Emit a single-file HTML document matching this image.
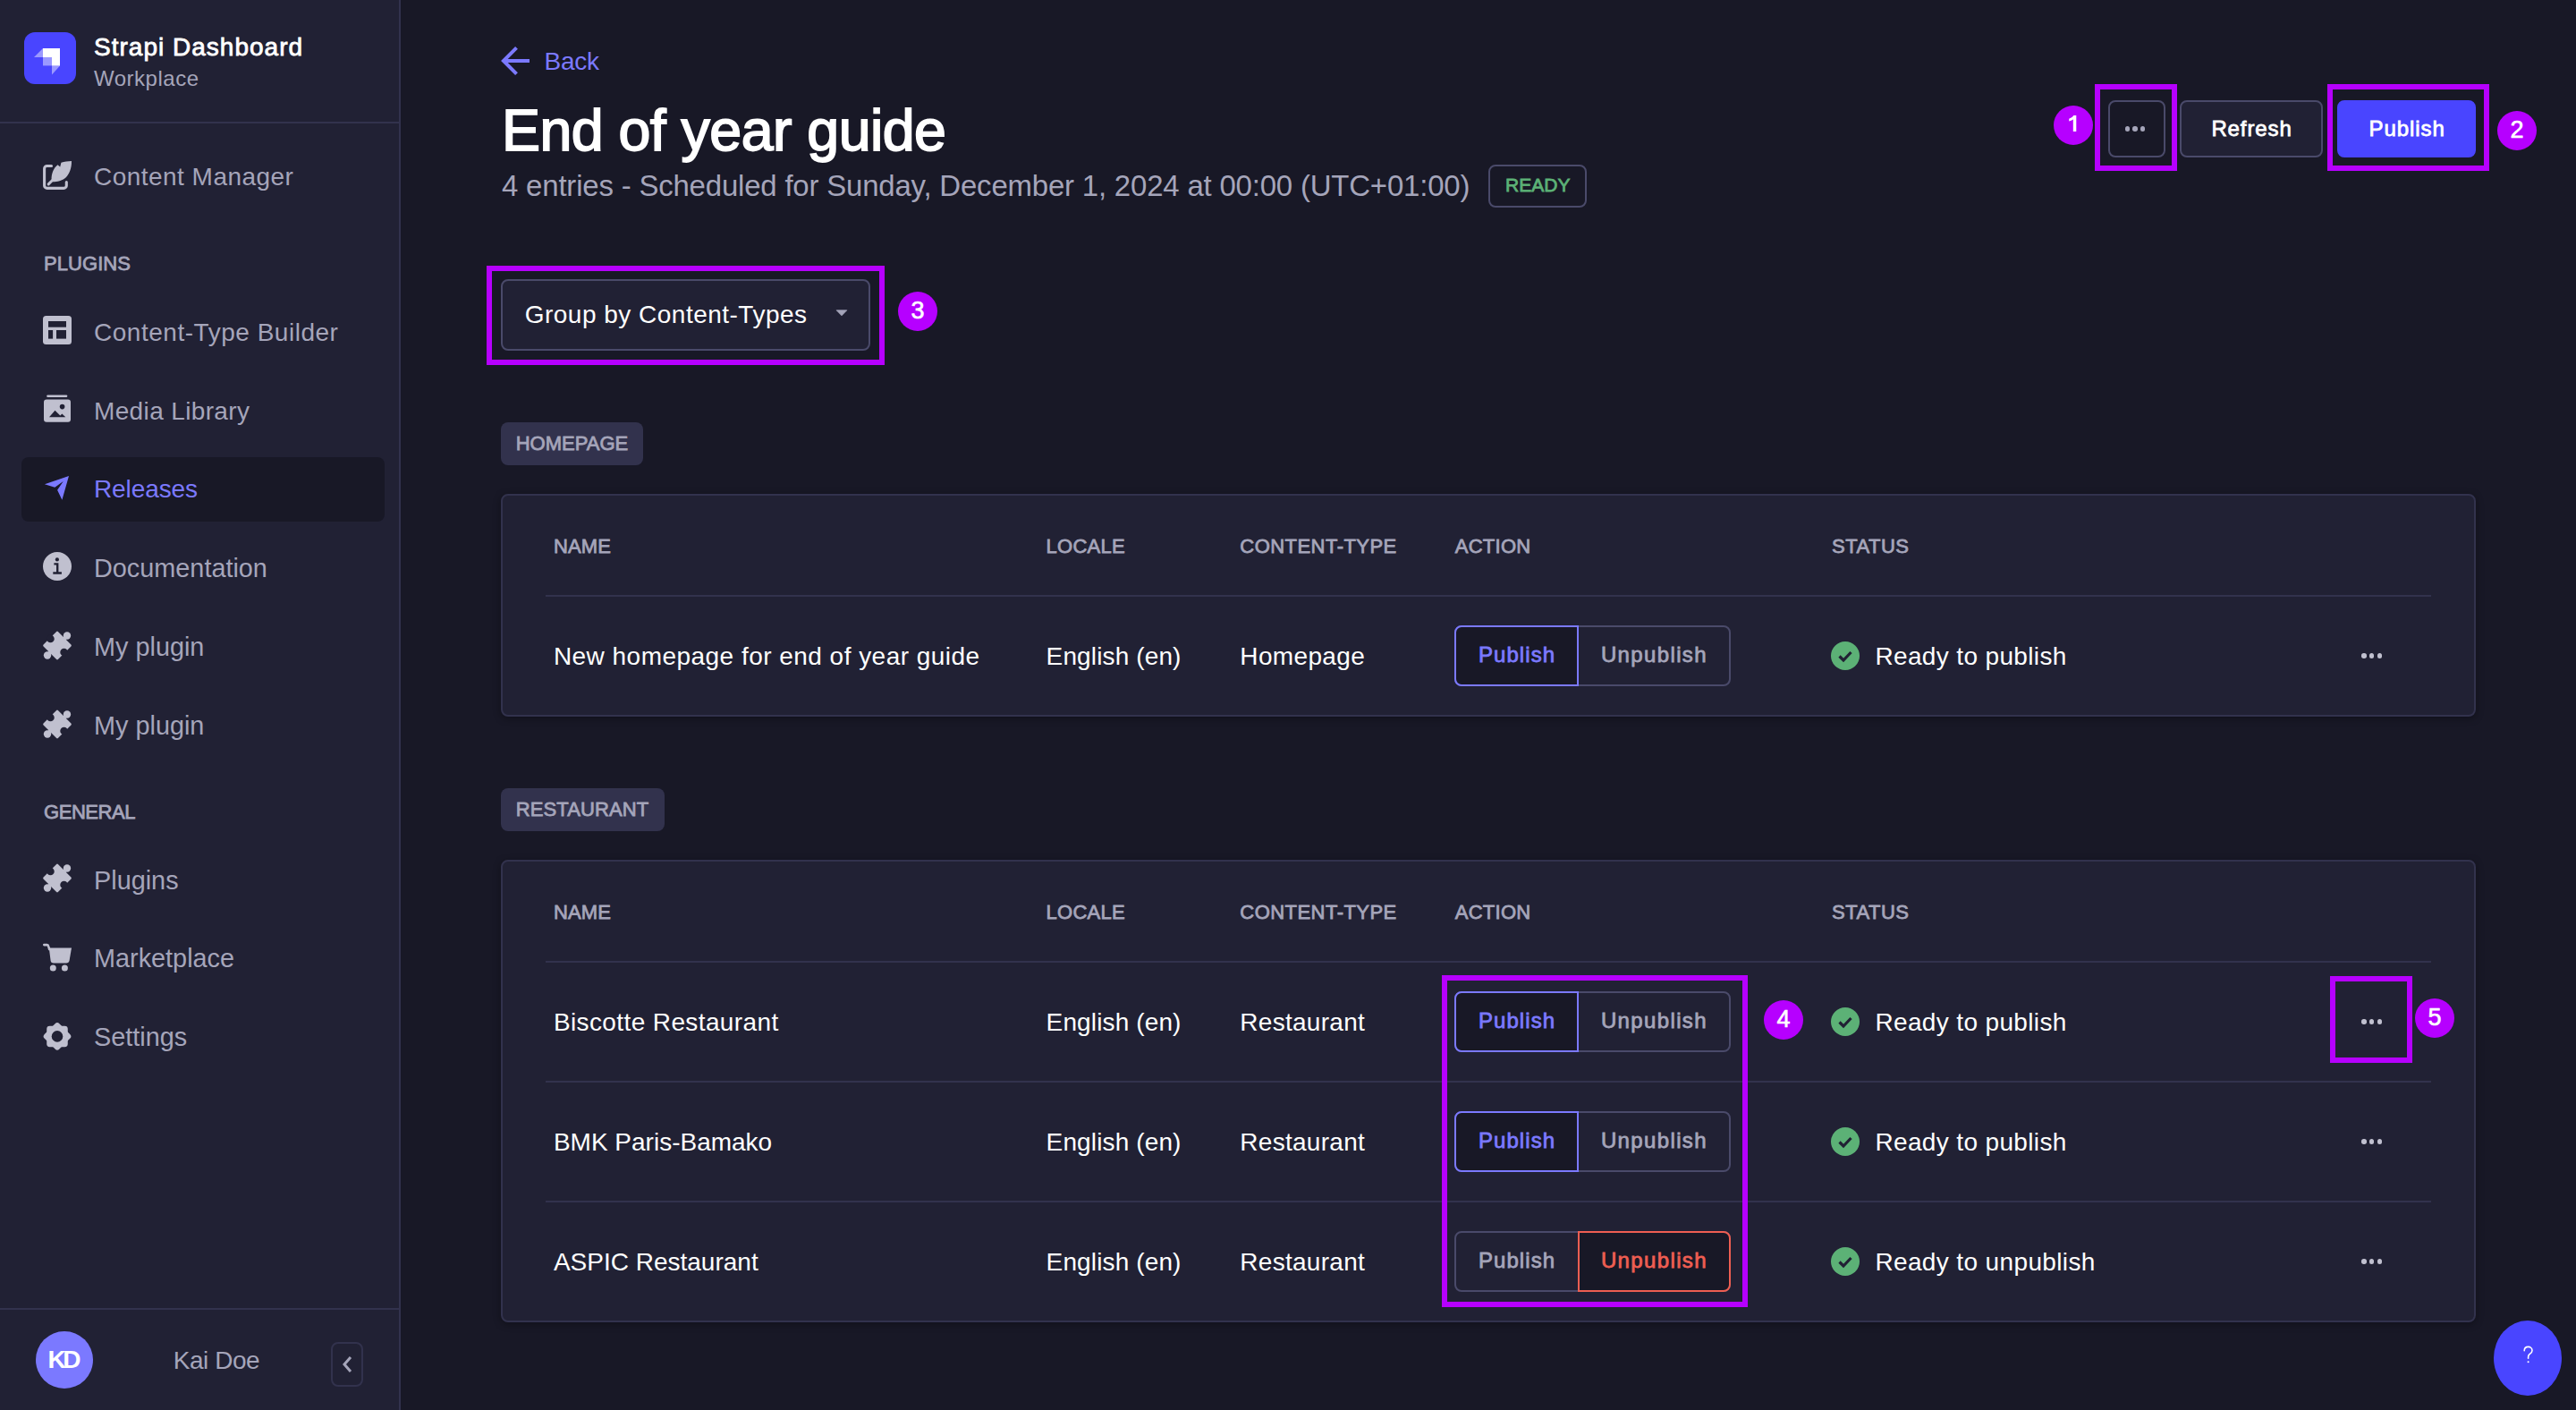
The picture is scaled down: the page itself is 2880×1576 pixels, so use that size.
<!DOCTYPE html>
<html><head><meta charset="utf-8"><style>
html,body{margin:0;padding:0;}
body{width:2880px;height:1576px;overflow:hidden;position:relative;background:#181826;font-family:"Liberation Sans",sans-serif;}
.t{position:absolute;white-space:nowrap;line-height:1;}
.b{position:absolute;}
.ann{border-radius:50%;background:#b600ff;color:#fff;font-size:27px;line-height:42px;text-align:center;-webkit-text-stroke:0.6px #fff;font-family:"Liberation Sans",sans-serif;}
</style></head><body>
<div class="b" style="left:0px;top:0px;width:446px;height:1576px;background:#212134;"></div>
<div class="b" style="left:446px;top:0px;width:2px;height:1576px;background:#32324d;"></div>
<div class="b" style="left:0px;top:136px;width:446px;height:2px;background:#32324d;"></div>
<div class="b" style="left:0px;top:1462px;width:446px;height:2px;background:#32324d;"></div>
<svg class="b" style="left:27px;top:36px" width="58" height="58" viewBox="0 0 58 58">
<rect width="58" height="58" rx="12" fill="#4945ff"/>
<path d="M40 18 H21 V28 H31 V37.4 H40 Z" fill="#fff"/>
<path d="M21 28 L11 28 L21 18 Z" fill="#fff" fill-opacity="0.45"/>
<path d="M21 28 H31 V37.4 H21 Z" fill="#fff" fill-opacity="0.45"/>
<path d="M31 37.4 V47.5 L40 37.4 Z" fill="#fff" fill-opacity="0.45"/>
</svg>
<div class="t" style="left:105.0px;top:38.8px;font-size:28.00px;color:#ffffff;-webkit-text-stroke:0.80px #ffffff;letter-spacing:1.01px;">Strapi Dashboard</div>
<div class="t" style="left:105.0px;top:75.6px;font-size:24.00px;color:#a5a5ba;letter-spacing:0.51px;">Workplace</div>
<div class="b" style="left:24px;top:511px;width:406px;height:72px;background:#181826;border-radius:8px;"></div>
<div class="t" style="left:105.0px;top:184.3px;font-size:28.00px;color:#a5a5ba;letter-spacing:0.47px;">Content Manager</div>
<svg class="b" style="left:48px;top:180.0px;overflow:visible" width="32" height="32" viewBox="0 0 32 32"><path d="M9.5 5.5 H4.6 a3 3 0 0 0 -3 3 V27.4 a3 3 0 0 0 3 3 H23.3 a3 3 0 0 0 3 -3 V23.6" stroke="#c0c0cf" stroke-width="3.1" fill="none" stroke-linecap="round"/><path d="M9.6 20.8 C9.4 14 12 7.5 16.5 4.2 L19.2 6.6 L20.4 1.8 C24 0.6 28 0.1 32 0 C32.2 8 29.5 14.5 25.5 18.5 C21.5 22 16 23.2 11 23.3 Z" fill="#c0c0cf"/><path d="M10.8 21.3 L6.2 25.9" stroke="#c0c0cf" stroke-width="3" stroke-linecap="round"/></svg>
<div class="t" style="left:105.0px;top:357.5px;font-size:28.00px;color:#a5a5ba;letter-spacing:0.52px;">Content-Type Builder</div>
<svg class="b" style="left:48px;top:353.2px;overflow:visible" width="32" height="32" viewBox="0 0 32 32"><rect x="0" y="0" width="32" height="32" rx="3.5" fill="#c0c0cf"/><rect x="6" y="6" width="20" height="6.7" fill="#212134"/><rect x="6" y="16" width="5.1" height="9.6" fill="#212134"/><rect x="15" y="16" width="11" height="9.6" fill="#212134"/></svg>
<div class="t" style="left:105.0px;top:445.6px;font-size:28.00px;color:#a5a5ba;letter-spacing:0.36px;">Media Library</div>
<svg class="b" style="left:48px;top:441.3px;overflow:visible" width="32" height="32" viewBox="0 0 32 32"><rect x="4.2" y="0.4" width="23.1" height="2.5" rx="1.2" fill="#c0c0cf"/><rect x="1" y="5.4" width="30" height="25.3" rx="3" fill="#c0c0cf"/><path d="M7 25.3 L13.5 17.8 L19.3 23.5 L21.4 21.4 L25.3 25.3 Z" fill="#212134"/><circle cx="21.6" cy="13.6" r="2.8" fill="#212134"/></svg>
<div class="t" style="left:105.0px;top:533.3px;font-size:28.00px;color:#7b79ff;letter-spacing:-0.10px;">Releases</div>
<svg class="b" style="left:48px;top:529.0px;overflow:visible" width="32" height="32" viewBox="0 0 32 32"><path d="M29 2.9 L1.9 12.3 L13.3 15.8 L22.7 9.1 L16.1 18.7 L21.4 29.8 Z" fill="#7b79ff"/></svg>
<div class="t" style="left:105.0px;top:620.6px;font-size:28.84px;color:#a5a5ba;">Documentation</div>
<svg class="b" style="left:48px;top:617.0px;overflow:visible" width="32" height="32" viewBox="0 0 32 32"><circle cx="16" cy="16" r="16" fill="#c0c0cf"/><circle cx="15.9" cy="8.4" r="2.1" fill="#212134"/><path d="M12.4 12.3 H17.4 V22.2 H20.9 V24.7 H11.3 V22.2 H15 V14.4 H12.4 Z" fill="#212134"/></svg>
<div class="t" style="left:105.0px;top:709.2px;font-size:28.84px;color:#a5a5ba;">My plugin</div>
<svg class="b" style="left:48px;top:705.6px;overflow:visible" width="32" height="32" viewBox="0 0 32 32"><g transform="translate(16 15.5) scale(1.05) translate(-16 -16) rotate(45 16 16)"><rect x="5" y="5" width="22" height="22" rx="1.2" fill="#c0c0cf"/><rect x="14" y="1.5" width="4" height="4" fill="#c0c0cf"/><circle cx="16" cy="1.2" r="4" fill="#c0c0cf"/><rect x="14" y="26.5" width="4" height="4" fill="#c0c0cf"/><circle cx="16" cy="30.8" r="4" fill="#c0c0cf"/><circle cx="5.8" cy="16" r="4.1" fill="#212134"/><circle cx="26.2" cy="16" r="4.1" fill="#212134"/></g></svg>
<div class="t" style="left:105.0px;top:797.1px;font-size:28.84px;color:#a5a5ba;">My plugin</div>
<svg class="b" style="left:48px;top:793.5px;overflow:visible" width="32" height="32" viewBox="0 0 32 32"><g transform="translate(16 15.5) scale(1.05) translate(-16 -16) rotate(45 16 16)"><rect x="5" y="5" width="22" height="22" rx="1.2" fill="#c0c0cf"/><rect x="14" y="1.5" width="4" height="4" fill="#c0c0cf"/><circle cx="16" cy="1.2" r="4" fill="#c0c0cf"/><rect x="14" y="26.5" width="4" height="4" fill="#c0c0cf"/><circle cx="16" cy="30.8" r="4" fill="#c0c0cf"/><circle cx="5.8" cy="16" r="4.1" fill="#212134"/><circle cx="26.2" cy="16" r="4.1" fill="#212134"/></g></svg>
<div class="t" style="left:105.0px;top:969.6px;font-size:28.84px;color:#a5a5ba;">Plugins</div>
<svg class="b" style="left:48px;top:966.0px;overflow:visible" width="32" height="32" viewBox="0 0 32 32"><g transform="translate(16 15.5) scale(1.05) translate(-16 -16) rotate(45 16 16)"><rect x="5" y="5" width="22" height="22" rx="1.2" fill="#c0c0cf"/><rect x="14" y="1.5" width="4" height="4" fill="#c0c0cf"/><circle cx="16" cy="1.2" r="4" fill="#c0c0cf"/><rect x="14" y="26.5" width="4" height="4" fill="#c0c0cf"/><circle cx="16" cy="30.8" r="4" fill="#c0c0cf"/><circle cx="5.8" cy="16" r="4.1" fill="#212134"/><circle cx="26.2" cy="16" r="4.1" fill="#212134"/></g></svg>
<div class="t" style="left:105.0px;top:1057.1px;font-size:28.84px;color:#a5a5ba;">Marketplace</div>
<svg class="b" style="left:48px;top:1053.5px;overflow:visible" width="32" height="32" viewBox="0 0 32 32"><path d="M1.3 2.1 H4.6 Q5.9 2.1 6.2 3.8 L7.2 7" fill="none" stroke="#c0c0cf" stroke-width="2.6" stroke-linecap="round"/><path d="M6.8 5.5 H32 L29.6 19.5 Q29.1 22.4 26 22.4 H11.8 Q9 22.4 8.6 19.8 Z" fill="#c0c0cf"/><circle cx="11.3" cy="28" r="3.5" fill="#c0c0cf"/><circle cx="24.4" cy="28" r="3.5" fill="#c0c0cf"/></svg>
<div class="t" style="left:105.0px;top:1145.1px;font-size:28.84px;color:#a5a5ba;">Settings</div>
<svg class="b" style="left:48px;top:1141.5px;overflow:visible" width="32" height="32" viewBox="0 0 32 32"><g transform="translate(16 16.4) scale(1.07) translate(-16 -16.5)"><rect x="5" y="5.5" width="22" height="22" rx="3.2" fill="#c0c0cf"/><rect x="5" y="5.5" width="22" height="22" rx="3.2" fill="#c0c0cf" transform="rotate(45 16 16.5)"/></g><circle cx="16" cy="16.4" r="6.3" fill="#212134"/></svg>
<div class="t" style="left:49.0px;top:283.7px;font-size:22.00px;color:#a5a5ba;-webkit-text-stroke:0.80px #a5a5ba;letter-spacing:0.07px;">PLUGINS</div>
<div class="t" style="left:49.0px;top:897.1px;font-size:22.00px;color:#a5a5ba;-webkit-text-stroke:0.80px #a5a5ba;letter-spacing:-0.44px;">GENERAL</div>
<div class="b" style="left:40px;top:1488px;width:64px;height:64px;border-radius:50%;background:#7b79ff;"></div>
<div class="t" style="left:53.6px;top:1506.1px;font-size:28.00px;color:#ffffff;font-weight:700;letter-spacing:-3.44px;">KD</div>
<div class="t" style="left:193.7px;top:1506.5px;font-size:28.00px;color:#a5a5ba;letter-spacing:-0.44px;">Kai Doe</div>
<div class="b" style="left:370px;top:1500px;width:36px;height:50px;border:2px solid #32324d;border-radius:8px;box-sizing:border-box;"></div>
<svg class="b" style="left:380px;top:1514px" width="16" height="22" viewBox="0 0 16 22"><path d="M12 3 L5 11 L12 19" stroke="#a5a5ba" stroke-width="3" fill="none"/></svg>
<svg class="b" style="left:556px;top:50px" width="40" height="36" viewBox="0 0 40 36"><path d="M36 18 H7 M21.5 3.4 L6.9 18 L21.5 32.6" stroke="#7b79ff" stroke-width="4" fill="none"/></svg>
<div class="t" style="left:608.5px;top:55.0px;font-size:28.00px;color:#7b79ff;letter-spacing:-0.25px;">Back</div>
<div class="t" style="left:561.0px;top:113.7px;font-size:64.50px;color:#ffffff;-webkit-text-stroke:1.80px #ffffff;letter-spacing:-0.54px;">End of year guide</div>
<div class="t" style="left:561.0px;top:192.1px;font-size:32.96px;color:#a5a5ba;letter-spacing:-0.19px;">4 entries - Scheduled for Sunday, December 1, 2024 at 00:00 (UTC+01:00)</div>
<div class="b" style="left:1664px;top:184px;width:110px;height:48px;border:2px solid #4a4a6a;border-radius:8px;box-sizing:border-box;"></div>
<div class="t" style="left:1683.0px;top:196.2px;font-size:21.00px;color:#5cb176;-webkit-text-stroke:0.80px #5cb176;letter-spacing:0.04px;">READY</div>
<div class="b" style="left:2357px;top:112px;width:64px;height:64px;border:2px solid #4a4a6a;border-radius:8px;box-sizing:border-box;background:#181826;"></div>
<div class="b" style="left:2375.80px;top:141.3px;width:5.4px;height:5.4px;border-radius:50%;background:#a5a5ba;"></div>
<div class="b" style="left:2384.30px;top:141.3px;width:5.4px;height:5.4px;border-radius:50%;background:#a5a5ba;"></div>
<div class="b" style="left:2392.80px;top:141.3px;width:5.4px;height:5.4px;border-radius:50%;background:#a5a5ba;"></div>
<div class="b" style="left:2437px;top:112px;width:160px;height:64px;border:2px solid #4a4a6a;border-radius:8px;box-sizing:border-box;background:#212134;"></div>
<div class="t" style="left:2472.4px;top:131.9px;font-size:24.00px;color:#ffffff;-webkit-text-stroke:0.80px #ffffff;letter-spacing:0.89px;">Refresh</div>
<div class="b" style="left:2613px;top:112px;width:155px;height:64px;border:2px solid #4945ff;border-radius:8px;box-sizing:border-box;background:#4945ff;"></div>
<div class="t" style="left:2648.5px;top:131.9px;font-size:24.00px;color:#ffffff;-webkit-text-stroke:0.80px #ffffff;letter-spacing:0.95px;">Publish</div>
<div class="b" style="left:560px;top:312px;width:413px;height:80px;border:2px solid #4a4a6a;border-radius:8px;box-sizing:border-box;background:#212134;"></div>
<div class="t" style="left:586.7px;top:338.3px;font-size:28.00px;color:#ffffff;letter-spacing:0.49px;">Group by Content-Types</div>
<svg class="b" style="left:933px;top:345px" width="16" height="10" viewBox="0 0 16 10"><path d="M2.2 1.8 H13.8 L8 7.8 Z" fill="#a5a5ba" stroke="#a5a5ba" stroke-width="0.8" stroke-linejoin="round"/></svg>
<div class="b" style="left:560px;top:472px;width:159px;height:48px;background:#32324d;border-radius:8px;"></div>
<div class="t" style="left:576.7px;top:484.7px;font-size:22.00px;color:#a5a5ba;-webkit-text-stroke:0.80px #a5a5ba;">HOMEPAGE</div>
<div class="b" style="left:560px;top:552px;width:2208px;height:249px;border:2px solid #32324d;border-radius:8px;box-sizing:border-box;background:#212134;box-shadow:0 2px 8px rgba(3,3,5,0.35);"></div>
<div class="t" style="left:618.9px;top:600.2px;font-size:22.00px;color:#a5a5ba;-webkit-text-stroke:0.80px #a5a5ba;letter-spacing:0.15px;">NAME</div>
<div class="t" style="left:1169.6px;top:600.2px;font-size:22.00px;color:#a5a5ba;-webkit-text-stroke:0.80px #a5a5ba;letter-spacing:0.24px;">LOCALE</div>
<div class="t" style="left:1386.3px;top:600.2px;font-size:22.00px;color:#a5a5ba;-webkit-text-stroke:0.80px #a5a5ba;letter-spacing:0.46px;">CONTENT-TYPE</div>
<div class="t" style="left:1626.7px;top:600.2px;font-size:22.00px;color:#a5a5ba;-webkit-text-stroke:0.80px #a5a5ba;letter-spacing:0.28px;">ACTION</div>
<div class="t" style="left:2048.0px;top:600.2px;font-size:22.00px;color:#a5a5ba;-webkit-text-stroke:0.80px #a5a5ba;letter-spacing:0.50px;">STATUS</div>
<div class="b" style="left:610px;top:665px;width:2108px;height:2px;background:#32324d;"></div>
<div class="t" style="left:618.9px;top:719.8px;font-size:28.00px;color:#ffffff;letter-spacing:0.47px;">New homepage for end of year guide</div>
<div class="t" style="left:1169.6px;top:719.8px;font-size:28.00px;color:#ffffff;letter-spacing:0.13px;">English (en)</div>
<div class="t" style="left:1386.3px;top:719.8px;font-size:28.00px;color:#ffffff;letter-spacing:0.36px;">Homepage</div>
<div class="b" style="left:1626px;top:698.5px;width:309px;height:68.0px;border:2px solid #4a4a6a;border-radius:8px;box-sizing:border-box;background:#212134;"></div>
<div class="b" style="left:1626px;top:698.5px;width:139px;height:68.0px;border:2px solid #7b79ff;border-radius:8px 0 0 8px;box-sizing:border-box;background:#181826;"></div>
<div class="t" style="left:1652.9px;top:720.2px;font-size:24.00px;color:#7b79ff;-webkit-text-stroke:0.80px #7b79ff;letter-spacing:1.08px;">Publish</div>
<div class="t" style="left:1789.9px;top:720.2px;font-size:24.00px;color:#a5a5ba;-webkit-text-stroke:0.80px #a5a5ba;letter-spacing:1.37px;">Unpublish</div>
<svg class="b" style="left:2047px;top:717.0px" width="32" height="32" viewBox="0 0 32 32"><circle cx="16" cy="16" r="16" fill="#5cb176"/><path d="M9.5 16.5 L14 21 L22.5 12" stroke="#212134" stroke-width="3.2" fill="none"/></svg>
<div class="t" style="left:2096.4px;top:719.8px;font-size:28.00px;color:#ffffff;letter-spacing:0.36px;">Ready to publish</div>
<div class="b" style="left:2640.25px;top:730.25px;width:5.5px;height:5.5px;border-radius:50%;background:#c0c0cf;"></div>
<div class="b" style="left:2648.95px;top:730.25px;width:5.5px;height:5.5px;border-radius:50%;background:#c0c0cf;"></div>
<div class="b" style="left:2657.65px;top:730.25px;width:5.5px;height:5.5px;border-radius:50%;background:#c0c0cf;"></div>
<div class="b" style="left:560px;top:881px;width:183px;height:48px;background:#32324d;border-radius:8px;"></div>
<div class="t" style="left:576.7px;top:893.7px;font-size:22.00px;color:#a5a5ba;-webkit-text-stroke:0.80px #a5a5ba;letter-spacing:0.11px;">RESTAURANT</div>
<div class="b" style="left:560px;top:961px;width:2208px;height:517px;border:2px solid #32324d;border-radius:8px;box-sizing:border-box;background:#212134;box-shadow:0 2px 8px rgba(3,3,5,0.35);"></div>
<div class="t" style="left:618.9px;top:1009.2px;font-size:22.00px;color:#a5a5ba;-webkit-text-stroke:0.80px #a5a5ba;letter-spacing:0.15px;">NAME</div>
<div class="t" style="left:1169.6px;top:1009.2px;font-size:22.00px;color:#a5a5ba;-webkit-text-stroke:0.80px #a5a5ba;letter-spacing:0.24px;">LOCALE</div>
<div class="t" style="left:1386.3px;top:1009.2px;font-size:22.00px;color:#a5a5ba;-webkit-text-stroke:0.80px #a5a5ba;letter-spacing:0.46px;">CONTENT-TYPE</div>
<div class="t" style="left:1626.7px;top:1009.2px;font-size:22.00px;color:#a5a5ba;-webkit-text-stroke:0.80px #a5a5ba;letter-spacing:0.28px;">ACTION</div>
<div class="t" style="left:2048.0px;top:1009.2px;font-size:22.00px;color:#a5a5ba;-webkit-text-stroke:0.80px #a5a5ba;letter-spacing:0.50px;">STATUS</div>
<div class="b" style="left:610px;top:1074px;width:2108px;height:2px;background:#32324d;"></div>
<div class="t" style="left:618.9px;top:1128.8px;font-size:28.00px;color:#ffffff;letter-spacing:0.39px;">Biscotte Restaurant</div>
<div class="t" style="left:1169.6px;top:1128.8px;font-size:28.00px;color:#ffffff;letter-spacing:0.13px;">English (en)</div>
<div class="t" style="left:1386.3px;top:1128.8px;font-size:28.00px;color:#ffffff;letter-spacing:0.28px;">Restaurant</div>
<div class="b" style="left:1626px;top:1107.5px;width:309px;height:68.0px;border:2px solid #4a4a6a;border-radius:8px;box-sizing:border-box;background:#212134;"></div>
<div class="b" style="left:1626px;top:1107.5px;width:139px;height:68.0px;border:2px solid #7b79ff;border-radius:8px 0 0 8px;box-sizing:border-box;background:#181826;"></div>
<div class="t" style="left:1652.9px;top:1129.2px;font-size:24.00px;color:#7b79ff;-webkit-text-stroke:0.80px #7b79ff;letter-spacing:1.08px;">Publish</div>
<div class="t" style="left:1789.9px;top:1129.2px;font-size:24.00px;color:#a5a5ba;-webkit-text-stroke:0.80px #a5a5ba;letter-spacing:1.37px;">Unpublish</div>
<svg class="b" style="left:2047px;top:1126.0px" width="32" height="32" viewBox="0 0 32 32"><circle cx="16" cy="16" r="16" fill="#5cb176"/><path d="M9.5 16.5 L14 21 L22.5 12" stroke="#212134" stroke-width="3.2" fill="none"/></svg>
<div class="t" style="left:2096.4px;top:1128.8px;font-size:28.00px;color:#ffffff;letter-spacing:0.36px;">Ready to publish</div>
<div class="b" style="left:2640.25px;top:1139.25px;width:5.5px;height:5.5px;border-radius:50%;background:#c0c0cf;"></div>
<div class="b" style="left:2648.95px;top:1139.25px;width:5.5px;height:5.5px;border-radius:50%;background:#c0c0cf;"></div>
<div class="b" style="left:2657.65px;top:1139.25px;width:5.5px;height:5.5px;border-radius:50%;background:#c0c0cf;"></div>
<div class="b" style="left:610px;top:1208px;width:2108px;height:2px;background:#32324d;"></div>
<div class="t" style="left:618.9px;top:1262.8px;font-size:28.00px;color:#ffffff;">BMK Paris-Bamako</div>
<div class="t" style="left:1169.6px;top:1262.8px;font-size:28.00px;color:#ffffff;letter-spacing:0.13px;">English (en)</div>
<div class="t" style="left:1386.3px;top:1262.8px;font-size:28.00px;color:#ffffff;letter-spacing:0.28px;">Restaurant</div>
<div class="b" style="left:1626px;top:1241.5px;width:309px;height:68.0px;border:2px solid #4a4a6a;border-radius:8px;box-sizing:border-box;background:#212134;"></div>
<div class="b" style="left:1626px;top:1241.5px;width:139px;height:68.0px;border:2px solid #7b79ff;border-radius:8px 0 0 8px;box-sizing:border-box;background:#181826;"></div>
<div class="t" style="left:1652.9px;top:1263.2px;font-size:24.00px;color:#7b79ff;-webkit-text-stroke:0.80px #7b79ff;letter-spacing:1.08px;">Publish</div>
<div class="t" style="left:1789.9px;top:1263.2px;font-size:24.00px;color:#a5a5ba;-webkit-text-stroke:0.80px #a5a5ba;letter-spacing:1.37px;">Unpublish</div>
<svg class="b" style="left:2047px;top:1260.0px" width="32" height="32" viewBox="0 0 32 32"><circle cx="16" cy="16" r="16" fill="#5cb176"/><path d="M9.5 16.5 L14 21 L22.5 12" stroke="#212134" stroke-width="3.2" fill="none"/></svg>
<div class="t" style="left:2096.4px;top:1262.8px;font-size:28.00px;color:#ffffff;letter-spacing:0.36px;">Ready to publish</div>
<div class="b" style="left:2640.25px;top:1273.25px;width:5.5px;height:5.5px;border-radius:50%;background:#c0c0cf;"></div>
<div class="b" style="left:2648.95px;top:1273.25px;width:5.5px;height:5.5px;border-radius:50%;background:#c0c0cf;"></div>
<div class="b" style="left:2657.65px;top:1273.25px;width:5.5px;height:5.5px;border-radius:50%;background:#c0c0cf;"></div>
<div class="b" style="left:610px;top:1342px;width:2108px;height:2px;background:#32324d;"></div>
<div class="t" style="left:618.9px;top:1396.8px;font-size:28.00px;color:#ffffff;">ASPIC Restaurant</div>
<div class="t" style="left:1169.6px;top:1396.8px;font-size:28.00px;color:#ffffff;letter-spacing:0.13px;">English (en)</div>
<div class="t" style="left:1386.3px;top:1396.8px;font-size:28.00px;color:#ffffff;letter-spacing:0.28px;">Restaurant</div>
<div class="b" style="left:1626px;top:1375.5px;width:309px;height:68.0px;border:2px solid #4a4a6a;border-radius:8px;box-sizing:border-box;background:#212134;"></div>
<div class="b" style="left:1764px;top:1375.5px;width:171px;height:68.0px;border:2px solid #ee5e52;border-radius:0 8px 8px 0;box-sizing:border-box;background:#181826;"></div>
<div class="t" style="left:1652.9px;top:1397.2px;font-size:24.00px;color:#a5a5ba;-webkit-text-stroke:0.80px #a5a5ba;letter-spacing:1.08px;">Publish</div>
<div class="t" style="left:1789.9px;top:1397.2px;font-size:24.00px;color:#ee5e52;-webkit-text-stroke:0.80px #ee5e52;letter-spacing:1.37px;">Unpublish</div>
<svg class="b" style="left:2047px;top:1394.0px" width="32" height="32" viewBox="0 0 32 32"><circle cx="16" cy="16" r="16" fill="#5cb176"/><path d="M9.5 16.5 L14 21 L22.5 12" stroke="#212134" stroke-width="3.2" fill="none"/></svg>
<div class="t" style="left:2096.4px;top:1396.8px;font-size:28.00px;color:#ffffff;letter-spacing:0.37px;">Ready to unpublish</div>
<div class="b" style="left:2640.25px;top:1407.25px;width:5.5px;height:5.5px;border-radius:50%;background:#c0c0cf;"></div>
<div class="b" style="left:2648.95px;top:1407.25px;width:5.5px;height:5.5px;border-radius:50%;background:#c0c0cf;"></div>
<div class="b" style="left:2657.65px;top:1407.25px;width:5.5px;height:5.5px;border-radius:50%;background:#c0c0cf;"></div>
<div class="b" style="left:2788px;top:1476px;width:76px;height:84px;border-radius:50%;background:#4945ff;"></div>
<svg class="b" style="left:2817px;top:1502.7px" width="19.2" height="24" viewBox="0 0 24 30"><path d="M6.5 8.5 C6.5 5 9 3 12 3 C15 3 17.5 5 17.5 8 C17.5 11 15.5 12 13.5 13.5 C12.3 14.5 12 15.5 12 17.5 V19" stroke="#fff" stroke-width="2" fill="none" stroke-linecap="round"/><circle cx="12" cy="24" r="1.3" fill="#fff"/></svg>
<div class="b" style="left:2342px;top:94px;width:92px;height:97px;border:6px solid #b600ff;box-sizing:border-box;"></div>
<div class="b ann" style="left:2296px;top:118px;width:44px;height:44px;"><svg width="44" height="44" viewBox="0 0 44 44" style="position:absolute;left:0;top:0"><path d="M25.3 10.9 V29.1 H21.8 V15.6 Q19.8 17.3 17.2 17.6 V14.7 Q20.6 13.8 22.4 10.9 Z" fill="#fff"/></svg></div>
<div class="b" style="left:2602px;top:94px;width:181px;height:97px;border:6px solid #b600ff;box-sizing:border-box;"></div>
<div class="b ann" style="left:2792px;top:124px;width:44px;height:44px;">2</div>
<div class="b" style="left:544px;top:297px;width:445px;height:111px;border:6px solid #b600ff;box-sizing:border-box;"></div>
<div class="b ann" style="left:1004px;top:326px;width:44px;height:44px;">3</div>
<div class="b" style="left:1612px;top:1090px;width:342px;height:371px;border:6px solid #b600ff;box-sizing:border-box;"></div>
<div class="b ann" style="left:1972px;top:1118px;width:44px;height:44px;">4</div>
<div class="b" style="left:2605px;top:1091px;width:92px;height:97px;border:6px solid #b600ff;box-sizing:border-box;"></div>
<div class="b ann" style="left:2700px;top:1116px;width:44px;height:44px;">5</div>
</body></html>
